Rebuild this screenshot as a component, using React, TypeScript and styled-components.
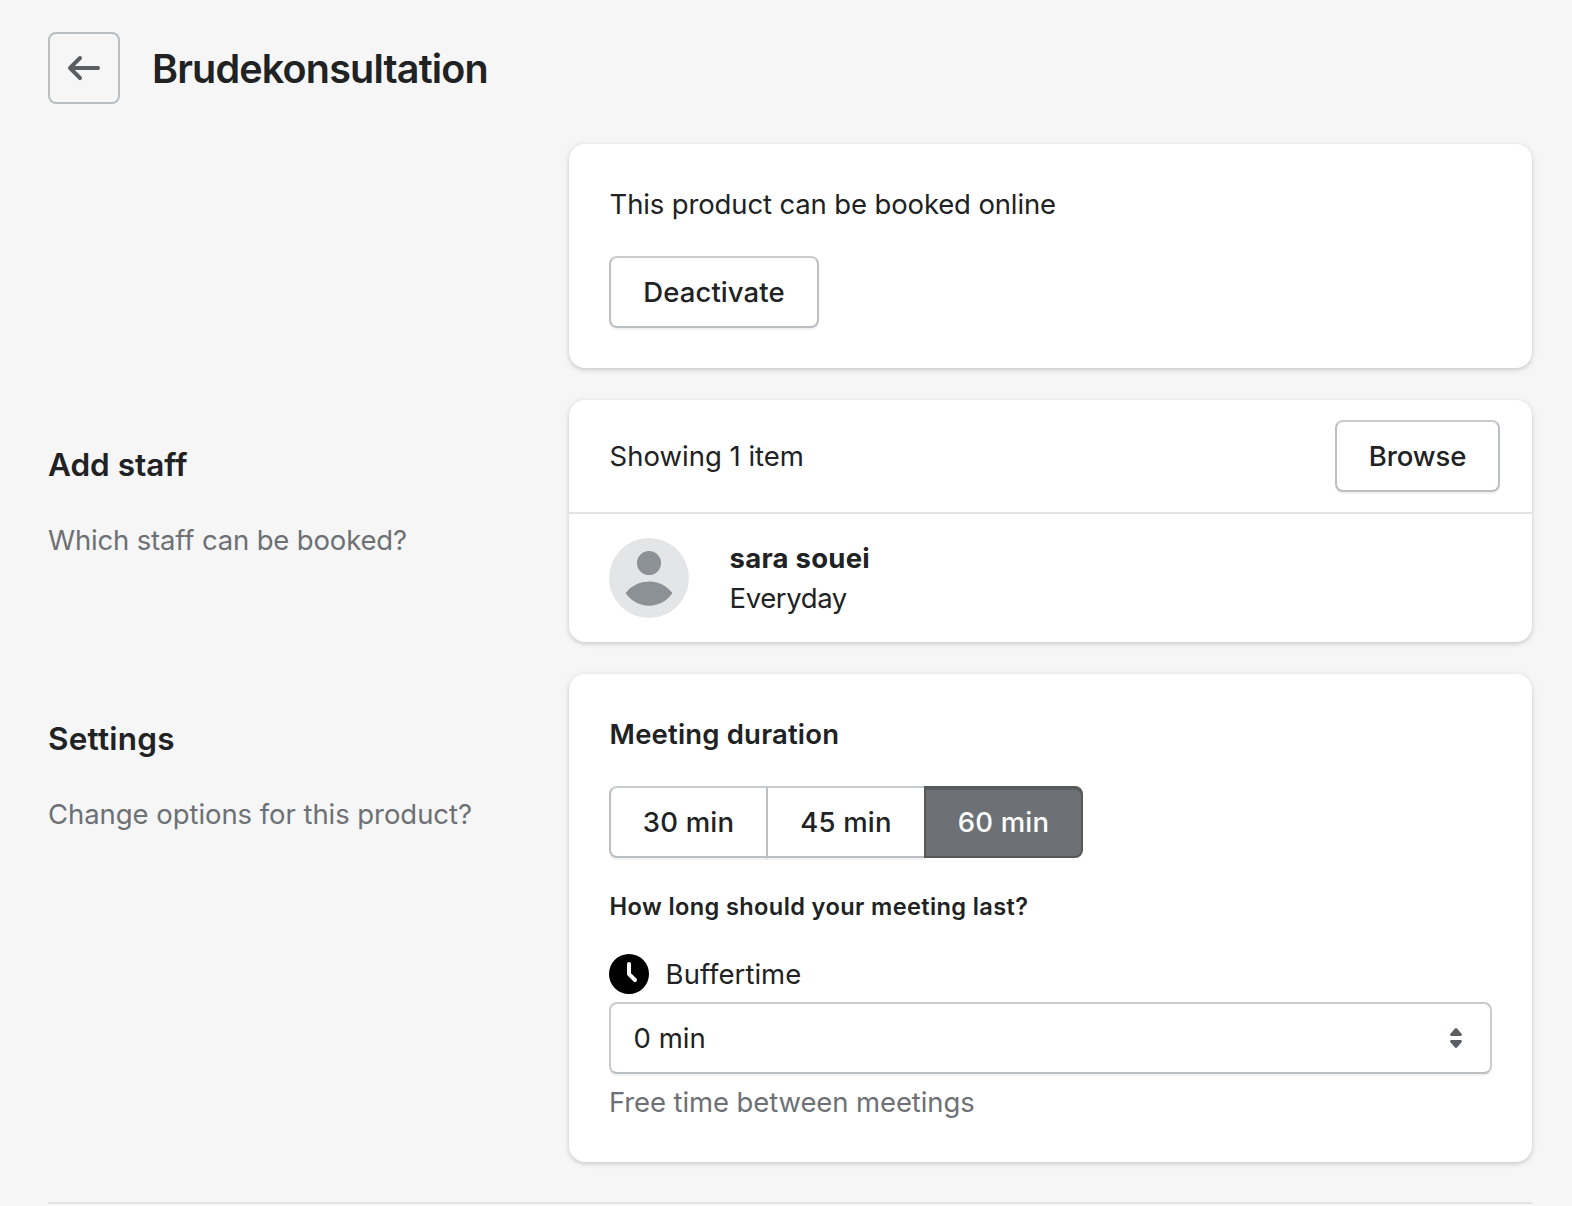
import React, { useState } from "react";
import styled, { createGlobalStyle, css } from "styled-components";

const GlobalStyle = createGlobalStyle`
  *, *::before, *::after { box-sizing: border-box; }
  body {
    margin: 0;
    background: #f6f6f6;
    color: #202223;
    font-family: Inter, "Liberation Sans", sans-serif;
    font-size: 27.5px;
    line-height: 40px;
    -webkit-font-smoothing: antialiased;
  }
  h1, h2, h3, p { margin: 0; }
  button { font-family: inherit; }
`;

const Page = styled.main`
  width: 1572px;
  height: 1206px;
  overflow: hidden;
  padding: 32px 40px 0 48px;
`;

const Header = styled.header`
  display: flex;
  align-items: center;
  gap: 32px;
  margin-bottom: 40px;
`;

const BackButton = styled.button`
  display: flex;
  align-items: center;
  justify-content: center;
  width: 72px;
  height: 72px;
  padding: 0;
  border: 2px solid #babfc3;
  border-radius: 8px;
  background: transparent;
`;

const Icon = styled.svg<{ $color: string }>`
  display: block;
  flex: none;
  width: 40px;
  height: 40px;
  fill: ${(p) => p.$color};
`;

const Title = styled.h1`
  padding-top: 2px;
  font-size: 39.5px;
  font-weight: 600;
  line-height: 56px;
  letter-spacing: -0.82px;
`;

const Sections = styled.div`
  display: flex;
  flex-direction: column;
  gap: 32px;
  padding-bottom: 40px;
  border-bottom: 2px solid #e1e3e5;
`;

const Section = styled.section`
  display: grid;
  grid-template-columns: 521px 963px;
`;

const Annotation = styled.div`
  padding-top: 40px;
`;

const SectionTitle = styled.h2<{ $spacing?: number }>`
  font-size: 31.5px;
  font-weight: 600;
  line-height: 50px;
  margin-bottom: 30px;
  letter-spacing: ${(p) => p.$spacing ?? 0}px;
`;

const Subdued = styled.p<{ $spacing?: number }>`
  color: #6d7175;
  letter-spacing: ${(p) => p.$spacing ?? 0}px;
`;

const Card = styled.div<{ $padded?: boolean }>`
  padding: ${(p) => (p.$padded ? "40px" : "0")};
  border-radius: 16px;
  background: #fff;
  box-shadow: 0 0 10px rgba(23, 24, 24, 0.05), 0 2px 4px rgba(0, 0, 0, 0.15);
`;

const Text = styled.p<{ $spacing?: number; $bold?: boolean }>`
  padding-left: 0.6px;
  font-weight: ${(p) => (p.$bold ? 700 : 400)};
  letter-spacing: ${(p) => p.$spacing ?? 0}px;
`;

const outlined = css`
  height: 72px;
  border: 2px solid #babfc3;
  border-top-color: #c9cccf;
  border-radius: 8px;
  background: #fff;
  box-shadow: 0 2px 0 rgba(0, 0, 0, 0.05);
`;

const Button = styled.button<{ $width: number; $spacing?: number }>`
  ${outlined}
  width: ${(p) => p.$width}px;
  padding: 0;
  color: #202223;
  font-size: 27.5px;
  font-weight: 500;
  line-height: 40px;
  letter-spacing: ${(p) => p.$spacing ?? 0}px;
`;

const ActivateButton = styled(Button)`
  display: block;
  margin-top: 32px;
`;

const ListHeader = styled.div`
  display: flex;
  align-items: center;
  justify-content: space-between;
  height: 114px;
  padding: 0 32px 0 40px;
  border-bottom: 2px solid #e1e3e5;
`;

const StaffRow = styled.div`
  display: flex;
  align-items: center;
  gap: 40px;
  height: 128px;
  padding: 0 40px;
`;

const AvatarImage = styled.svg`
  display: block;
  width: 80px;
  height: 80px;
  border-radius: 50%;
  background: #e4e5e7;
  fill: #8c9196;
`;

const CardTitle = styled.h3`
  padding-left: 0.6px;
  font-size: 27.5px;
  font-weight: 600;
  line-height: 40px;
  letter-spacing: 0.18px;
`;

const Segmented = styled.div`
  display: flex;
  margin: 32px 0;
`;

const Segment = styled(Button)<{ $active: boolean }>`
  border-radius: 0;
  &:first-child { border-radius: 8px 0 0 8px; }
  &:last-child { border-radius: 0 8px 8px 0; }
  & + & { margin-left: -2px; }
  ${(p) =>
    p.$active &&
    css`
      position: relative;
      border-color: #575959;
      background: #6d7175;
      box-shadow: inset 0 2px 0 #5c5f62;
      color: #fff;
    `}
`;

const Hint = styled.p`
  padding: 1px 0 0 0.6px;
  font-size: 23.6px;
  font-weight: 600;
  line-height: 32px;
  letter-spacing: 0.37px;
`;

const FieldLabel = styled.div`
  display: flex;
  align-items: center;
  gap: 16px;
  margin: 31px 0 8px;
`;

const SelectBox = styled.div`
  ${outlined}
  display: flex;
  align-items: center;
  justify-content: space-between;
  margin-bottom: 8px;
  padding: 0 14px 0 22px;
  border-color: #c9cccf;
  border-bottom-color: #babfc3;
`;

const durations = [
  { label: "30 min", width: 159 },
  { label: "45 min", width: 160 },
  { label: "60 min", width: 159 },
];

export default function App() {
  const [duration, setDuration] = useState("60 min");
  return (
    <>
      <GlobalStyle />
      <Page>
        <Header>
          <BackButton aria-label="Back">
            <Icon viewBox="0 0 20 20" $color="#5c5f62">
              <path d="M17 9H5.414l3.293-3.293a.999.999 0 1 0-1.414-1.414l-5 5a.999.999 0 0 0 0 1.414l5 5a.997.997 0 0 0 1.414 0 .999.999 0 0 0 0-1.414L5.414 11H17a1 1 0 1 0 0-2z" />
            </Icon>
          </BackButton>
          <Title>Brudekonsultation</Title>
        </Header>
        <Sections>
          <Section>
            <Annotation />
            <Card $padded>
              <Text $spacing={-0.14}>This product can be booked online</Text>
              <ActivateButton $width={210} $spacing={0.08}>
                Deactivate
              </ActivateButton>
            </Card>
          </Section>
          <Section>
            <Annotation>
              <SectionTitle>Add staff</SectionTitle>
              <Subdued $spacing={-0.16}>Which staff can be booked?</Subdued>
            </Annotation>
            <Card>
              <ListHeader>
                <Text>Showing 1 item</Text>
                <Button $width={165} $spacing={-0.1}>
                  Browse
                </Button>
              </ListHeader>
              <StaffRow>
                <AvatarImage viewBox="0 0 40 40">
                  <path d="M8.28 27.5A14.95 14.95 0 0 1 20 21.8c4.76 0 8.97 2.24 11.72 5.7a14.02 14.02 0 0 1-8.25 5.91 14.82 14.82 0 0 1-6.94 0 14.02 14.02 0 0 1-8.25-5.9zM13.99 12.78a6.02 6.02 0 1 1 12.03 0 6.02 6.02 0 0 1-12.03 0z" />
                </AvatarImage>
                <div>
                  <Text $bold $spacing={0.26}>
                    sara souei
                  </Text>
                  <Text $spacing={-0.4}>Everyday</Text>
                </div>
              </StaffRow>
            </Card>
          </Section>
          <Section>
            <Annotation>
              <SectionTitle $spacing={0.22}>Settings</SectionTitle>
              <Subdued $spacing={-0.06}>Change options for this product?</Subdued>
            </Annotation>
            <Card $padded>
              <CardTitle>Meeting duration</CardTitle>
              <Segmented>
                {durations.map((d) => (
                  <Segment
                    key={d.label}
                    $width={d.width}
                    $spacing={0.2}
                    $active={d.label === duration}
                    onClick={() => setDuration(d.label)}
                  >
                    {d.label}
                  </Segment>
                ))}
              </Segmented>
              <Hint>How long should your meeting last?</Hint>
              <FieldLabel>
                <Icon viewBox="0 0 20 20" $color="#000">
                  <path
                    fillRule="evenodd"
                    d="M10 20a10 10 0 1 0 0-20 10 10 0 0 0 0 20zm1-15a1 1 0 1 0-2 0v5a1 1 0 0 0 .293.707l3 3a1 1 0 0 0 1.414-1.414L11 9.586V5z"
                  />
                </Icon>
                <Text $spacing={0.04}>Buffertime</Text>
              </FieldLabel>
              <SelectBox>
                <Text>0 min</Text>
                <Icon viewBox="0 0 20 20" $color="#5c5f62">
                  <path d="M7.676 9h4.648c.563 0 .879-.603.53-1.014l-2.323-2.746a.708.708 0 0 0-1.062 0l-2.324 2.746c-.347.411-.032 1.014.531 1.014zm4.648 2h-4.648c-.563 0-.878.603-.53 1.014l2.323 2.746c.27.32.792.32 1.062 0l2.323-2.746c.349-.411.033-1.014-.53-1.014z" />
                </Icon>
              </SelectBox>
              <Subdued $spacing={-0.11}>Free time between meetings</Subdued>
            </Card>
          </Section>
        </Sections>
      </Page>
    </>
  );
}
